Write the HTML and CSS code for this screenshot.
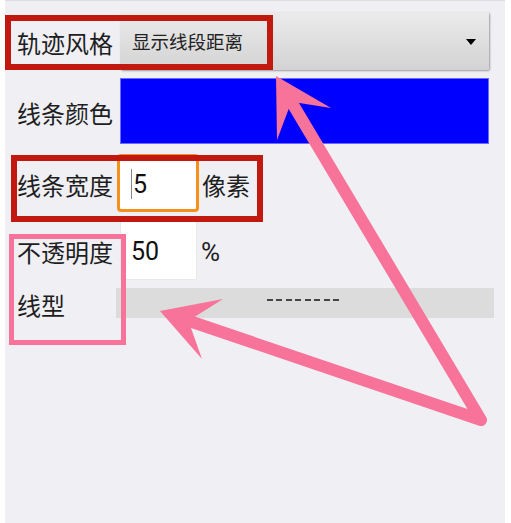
FILE: index.html
```html
<!DOCTYPE html>
<html lang="zh-CN">
<head>
<meta charset="utf-8">
<title>轨迹风格</title>
<link rel="stylesheet" href="styles.css">
</head>
<body>
<div class="page">
  <div class="screen">
    <div class="row row-style">
      <div class="label">轨迹风格</div>
      <div class="dropdown">
        <span class="dropdown-text">显示线段距离</span>
        <span class="caret"></span>
      </div>
    </div>
    <div class="row row-color">
      <div class="label">线条颜色</div>
      <div class="swatch"></div>
    </div>
    <div class="row row-width">
      <div class="label">线条宽度</div>
      <div class="input input-focus"><span class="cursor"></span><span class="num">5</span></div>
      <div class="unit unit-px">像素</div>
    </div>
    <div class="row row-opacity">
      <div class="label">不透明度</div>
      <div class="input input-plain"><span class="num">50</span></div>
      <div class="unit unit-pct">%</div>
    </div>
    <div class="row row-type">
      <div class="label">线型</div>
      <div class="linebar"><div class="dashes"></div></div>
    </div>
  </div>
  <svg class="annot" viewBox="0 0 511 523" width="511" height="523">
    <rect x="8" y="18" width="262" height="49" fill="none" stroke="#c1180f" stroke-width="6"/>
    <rect x="14" y="158" width="246" height="61" fill="none" stroke="#c1180f" stroke-width="6"/>
    <rect x="11.5" y="236.5" width="112" height="106" fill="none" stroke="#f77399" stroke-width="5"/>
    <polyline points="293.4,105.2 481,420 192.2,322" fill="none" stroke="#f77399" stroke-width="12" stroke-linejoin="round" stroke-linecap="round"/>
    <polygon points="276,76 331,108 291.4,101.8 277,140" fill="#f77399"/>
    <polygon points="160,311 223,299 188.4,320.7 202,359" fill="#f77399"/>
  </svg>
</div>
</body>
</html>
```

FILE: styles.css
```css
html, body {
  margin: 0;
  padding: 0;
  background: #ffffff;
}

.page {
  position: relative;
  width: 511px;
  height: 523px;
  overflow: hidden;
}

.screen {
  box-sizing: border-box;
  margin-left: 5px;
  width: 500px;
  height: 523px;
  border-top: 1px solid #dcdce2;
  background: #efeff4;
  padding: 11px 0 0 12px;
  font-family: "Noto Sans CJK SC", "Noto Sans", sans-serif;
  color: #1e1e1e;
}

.row {
  display: flex;
  align-items: center;
}

.label {
  width: 103px;
  flex: none;
  font-size: 24px;
  line-height: 1;
  padding-top: 3px;
  box-sizing: border-box;
}

.row-style {
  height: 58px;
}

.dropdown {
  box-sizing: border-box;
  width: 369px;
  height: 58px;
  display: flex;
  align-items: center;
  justify-content: space-between;
  padding: 0 13px 0 12px;
  border-radius: 2px;
  background: linear-gradient(#ebebeb, #d3d3d3);
  box-shadow: 1px 1px 2px rgba(0, 0, 0, 0.35);
}

.dropdown-text {
  font-size: 18.5px;
  line-height: 1;
  color: #222;
}

.caret {
  width: 0;
  height: 0;
  border-left: 5px solid transparent;
  border-right: 5px solid transparent;
  border-top: 6px solid #000;
  margin-top: 2px;
}

.row-color {
  margin-top: 8px;
  height: 66px;
}

.swatch {
  box-sizing: border-box;
  width: 369px;
  height: 66px;
  background: #0000ff;
  border: 1px solid #6b6bff;
}

.row-width {
  margin-top: 10px;
  height: 58px;
}

.input {
  box-sizing: border-box;
  display: flex;
  align-items: center;
  background: #ffffff;
  font-family: Roboto, "Noto Sans", sans-serif;
  font-size: 25px;
  line-height: 1;
  color: #111;
}

.input-focus {
  width: 82px;
  height: 58px;
  margin-left: -3px;
  border: 3px solid #f7901a;
  border-radius: 4px;
  padding-left: 11px;
}

.cursor {
  width: 1px;
  height: 30px;
  background: #888;
  margin-right: 1px;
  margin-top: 2px;
}

.num {
  padding-top: 3px;
}

.unit {
  line-height: 1;
  padding-top: 3px;
}

.unit-px {
  font-size: 24px;
  margin-left: 3px;
}

.row-opacity {
  margin-top: 8px;
  height: 60px;
}

.input-plain {
  width: 77px;
  height: 60px;
  border: 1px solid #e9e9ec;
  padding-left: 10px;
}

.unit-pct {
  font-family: Roboto, "Noto Sans", sans-serif;
  font-size: 26px;
  margin-left: 4px;
}

.row-type {
  margin-top: 8px;
  height: 30px;
}

.label + .linebar {
  margin-left: -4px;
}

.linebar {
  width: 378px;
  height: 30px;
  background: #dcdcdc;
  display: flex;
  align-items: flex-start;
}

.dashes {
  margin-top: 11px;
  margin-left: 151px;
  width: 76px;
  height: 2px;
  background: repeating-linear-gradient(90deg, #444 0, #444 6px, transparent 6px, transparent 9.5px);
}

.annot {
  position: absolute;
  left: 0;
  top: 0;
  pointer-events: none;
}
```
